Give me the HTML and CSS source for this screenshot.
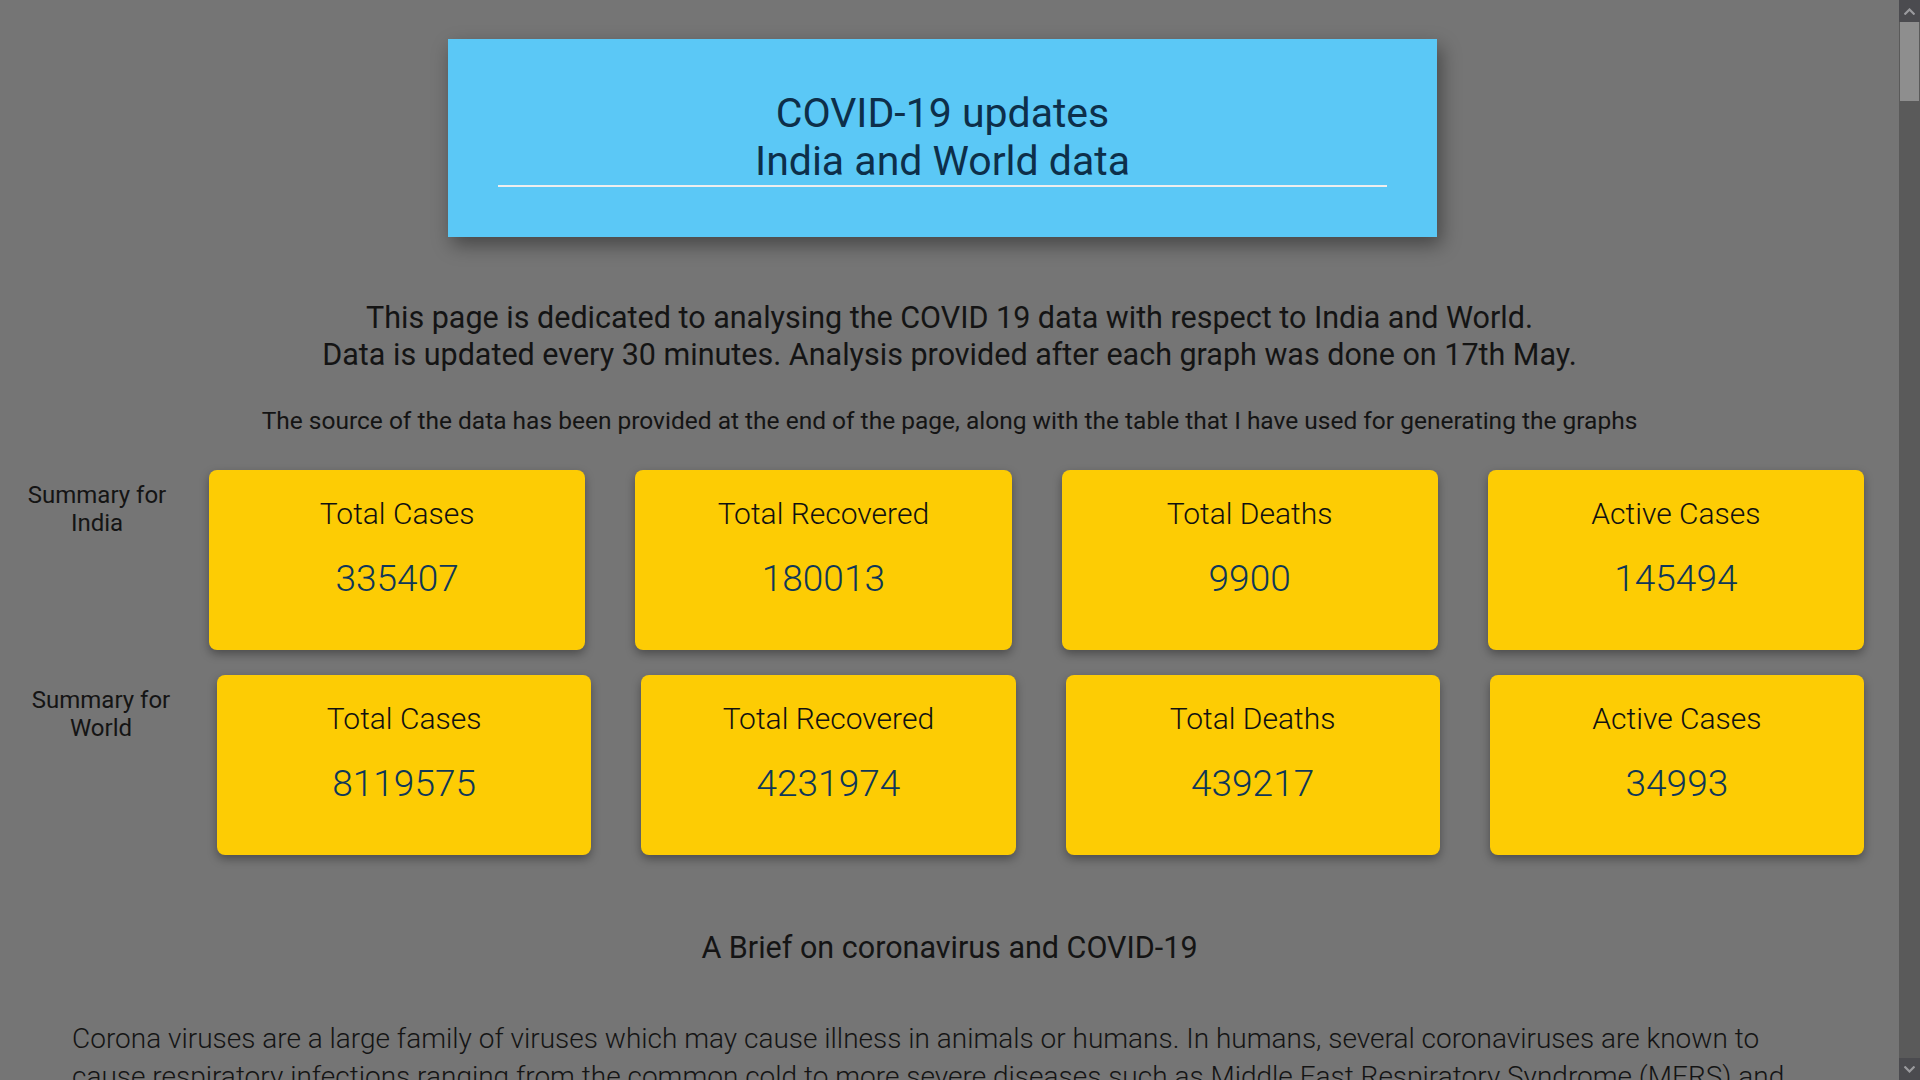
FILE: index.html
```html
<!DOCTYPE html>
<html lang="en">
<head>
<meta charset="utf-8">
<title>COVID-19 updates</title>
<link rel="stylesheet" href="styles.css">
</head>
<body>
<main class="page">
  <header class="hero">
    <h1 class="hero-title">COVID-19 updates<br>India and World data</h1>
  </header>

  <p class="intro">This page is dedicated to analysing the COVID 19 data with respect to India and World.<br>Data is updated every 30 minutes. Analysis provided after each graph was done on 17th May.</p>
  <p class="source">The source of the data has been provided at the end of the page, along with the table that I have used for generating the graphs</p>

  <section class="summary summary-india">
    <div class="summary-label">Summary for India</div>
    <div class="cards">
      <div class="card"><div class="card-title">Total Cases</div><div class="card-value">335407</div></div>
      <div class="card"><div class="card-title">Total Recovered</div><div class="card-value">180013</div></div>
      <div class="card"><div class="card-title">Total Deaths</div><div class="card-value">9900</div></div>
      <div class="card"><div class="card-title">Active Cases</div><div class="card-value">145494</div></div>
    </div>
  </section>

  <section class="summary summary-world">
    <div class="summary-label">Summary for World</div>
    <div class="cards">
      <div class="card"><div class="card-title">Total Cases</div><div class="card-value">8119575</div></div>
      <div class="card"><div class="card-title">Total Recovered</div><div class="card-value">4231974</div></div>
      <div class="card"><div class="card-title">Total Deaths</div><div class="card-value">439217</div></div>
      <div class="card"><div class="card-title">Active Cases</div><div class="card-value">34993</div></div>
    </div>
  </section>

  <h2 class="brief-title">A Brief on coronavirus and COVID-19</h2>
  <p class="brief-text">Corona viruses are a large family of viruses which may cause illness in animals or humans. In humans, several coronaviruses are known to cause respiratory infections ranging from the common cold to more severe diseases such as Middle East Respiratory Syndrome (MERS) and Severe Acute Respiratory Syndrome (SARS). The most recently discovered coronavirus causes coronavirus disease COVID-19.</p>
</main>

<div class="scrollbar" aria-hidden="true">
  <div class="scroll-btn scroll-up"><svg width="11" height="7" viewBox="0 0 11 7"><path d="M0.5 6.5 L5.5 1.5 L10.5 6.5" fill="none" stroke="#9a9a9e" stroke-width="2.2"/></svg></div>
  <div class="scroll-track"><div class="scroll-thumb"></div></div>
  <div class="scroll-btn scroll-down"><svg width="11" height="7" viewBox="0 0 11 7"><path d="M0.5 0.5 L5.5 5.5 L10.5 0.5" fill="none" stroke="#9a9a9e" stroke-width="2.2"/></svg></div>
</div>
</body>
</html>
```
FILE: styles.css
```css
html {
  background: #757575;
}
body {
  margin: 0;
  font-family: Roboto, "Liberation Sans", sans-serif;
  color: #141414;
  background: #757575;
}
.page {
  width: 1899px;
  min-height: 14100px;
  padding-top: 39px;
  box-sizing: border-box;
}
.hero {
  margin-left: 448px;
  width: 989px;
  box-sizing: border-box;
  padding: 50px;
  background: #5bc8f6;
  box-shadow: 4px 8px 18px rgba(0, 0, 0, 0.4);
}
.hero-title {
  margin: 0;
  padding: 0;
  font-size: 41px;
  font-weight: 400;
  line-height: 48px;
  text-align: center;
  color: #0d2f4a;
  border-bottom: 2px solid #eeeeee;
}
.intro {
  margin: 62px 0 0;
  font-size: 30.5px;
  font-weight: 400;
  line-height: 37px;
  text-align: center;
  color: #141414;
}
.source {
  margin: 35px 0 0;
  font-size: 24.5px;
  font-weight: 400;
  line-height: 26px;
  text-align: center;
  color: #141414;
}
.summary {
  display: flex;
  align-items: flex-start;
  padding-right: 35px;
}
.summary-india {
  margin-top: 36px;
}
.summary-world {
  margin-top: 25px;
}
.summary-label {
  flex: none;
  margin-top: 11px;
  margin-right: 15px;
  font-size: 24px;
  line-height: 28px;
  text-align: center;
  color: #141414;
  padding-left: 20px;
  padding-right: 20px;
  box-sizing: border-box;
}
.summary-india .summary-label {
  width: 194px;
}
.summary-world .summary-label {
  width: 202px;
}
.cards {
  flex: 1;
  display: flex;
  gap: 50px;
}
.card {
  flex: 1;
  height: 180px;
  box-sizing: border-box;
  padding-top: 26px;
  background: #fdcc04;
  border-radius: 8px;
  box-shadow: 0 4px 10px rgba(0, 0, 0, 0.35);
  text-align: center;
}
.card-title {
  font-size: 30px;
  font-weight: 300;
  line-height: 35px;
  color: #111111;
}
.card-value {
  margin-top: 27px;
  font-size: 37px;
  font-weight: 300;
  line-height: 42px;
  color: #0f3758;
}
.brief-title {
  margin: 76px 0 0;
  font-size: 30.5px;
  font-weight: 400;
  line-height: 33px;
  text-align: center;
  color: #141414;
}
.brief-text {
  margin: 56px 90px 0 72px;
  font-size: 28px;
  font-weight: 300;
  line-height: 38px;
  color: #141414;
}

/* window scrollbar */
.scrollbar {
  position: fixed;
  top: 0;
  right: 0;
  width: 21px;
  height: 100vh;
  display: flex;
  flex-direction: column;
  background: #5a5a5a;
}
.scroll-btn {
  flex: none;
  height: 22px;
  display: flex;
  align-items: center;
  justify-content: center;
  background: #4b4b4f;
}
.scroll-track {
  flex: 1;
  padding: 0 1px;
}
.scroll-thumb {
  height: 79px;
  background: #8e8e8e;
}
```
